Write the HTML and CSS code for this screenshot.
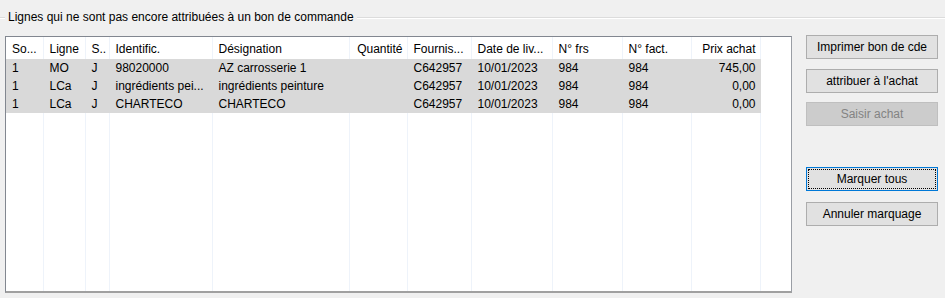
FILE: index.html
```
<!DOCTYPE html>
<html lang="fr">
<head>
    <meta charset="UTF-8">
    <title>Lignes non attribuées</title>
    <link rel="stylesheet" href="styles.css">
</head>
<body>

<div class="group">
    <div class="group-title">
        <span class="line short"></span>
        <span class="caption">Lignes qui ne sont pas encore attribuées à un bon de commande</span>
        <span class="line"></span>
    </div>

    <div class="content">
        <!-- Liste des lignes -->
        <div class="list">
            <table class="grid">
                <colgroup>
                    <col class="c1">
                    <col class="c2">
                    <col class="c3">
                    <col class="c4">
                    <col class="c5">
                    <col class="c6">
                    <col class="c7">
                    <col class="c8">
                    <col class="c9">
                    <col class="c10">
                    <col class="c11">
                    <col>
                </colgroup>
                <thead>
                    <tr>
                        <th>So...</th>
                        <th>Ligne</th>
                        <th>S..</th>
                        <th>Identific.</th>
                        <th>Désignation</th>
                        <th class="num">Quantité</th>
                        <th>Fournis...</th>
                        <th>Date de liv...</th>
                        <th>N° frs</th>
                        <th>N° fact.</th>
                        <th class="num">Prix achat</th>
                        <th class="rest"></th>
                    </tr>
                </thead>
                <tbody>
                    <tr class="sel">
                        <td>1</td><td>MO</td><td>J</td><td>98020000</td><td>AZ carrosserie 1</td><td class="num"></td>
                        <td>C642957</td><td>10/01/2023</td><td>984</td><td>984</td><td class="num">745,00</td><td class="rest"></td>
                    </tr>
                    <tr class="sel">
                        <td>1</td><td>LCa</td><td>J</td><td>ingrédients pei...</td><td>ingrédients peinture</td><td class="num"></td>
                        <td>C642957</td><td>10/01/2023</td><td>984</td><td>984</td><td class="num">0,00</td><td class="rest"></td>
                    </tr>
                    <tr class="sel">
                        <td>1</td><td>LCa</td><td>J</td><td>CHARTECO</td><td>CHARTECO</td><td class="num"></td>
                        <td>C642957</td><td>10/01/2023</td><td>984</td><td>984</td><td class="num">0,00</td><td class="rest"></td>
                    </tr>
                    <tr class="filler">
                        <td></td><td></td><td></td><td></td><td></td><td></td>
                        <td></td><td></td><td></td><td></td><td></td><td class="rest"></td>
                    </tr>
                </tbody>
            </table>
        </div>

        <!-- Boutons -->
        <div class="buttons">
            <button class="btn">Imprimer bon de cde</button>
            <button class="btn">attribuer à l'achat</button>
            <button class="btn" disabled>Saisir achat</button>
            <button class="btn focused"><span>Marquer tous</span></button>
            <button class="btn">Annuler marquage</button>
        </div>
    </div>
</div>

</body>
</html>
```

FILE: styles.css
```
html, body {
    margin: 0;
    padding: 0;
}
body {
    width: 945px;
    height: 298px;
    overflow: hidden;
    background-color: #f0f0f0;
    font-family: 'Liberation Sans', Arial, sans-serif;
    font-size: 12px;
    color: #000;
}

/* Cadre de groupe */
.group-title {
    display: flex;
    align-items: center;
    height: 34px;
}
.group-title .line {
    flex: 1;
    height: 1px;
    background-color: #dcdcdc;
    border-bottom: 1px solid #fff;
    margin-top: 1px;
}
.group-title .line.short {
    flex: 0 0 5px;
}
.caption {
    padding: 0 3px;
    margin-top: -1px;
}

.content {
    display: flex;
    padding-left: 5px;
    margin-top: 2px;
}

/* Liste */
.list {
    width: 785px;
    height: 254px;
    background-color: #fff;
    border: 1px solid #828790;
    border-right-color: #9a9ea5;
    border-bottom: 2px solid #a0a0a0;
    overflow: hidden;
}
.grid {
    width: 755px;
    height: 100%;
    table-layout: fixed;
    border-collapse: collapse;
}
.c1 { width: 37px; }
.c2 { width: 42px; }
.c3 { width: 24px; }
.c4 { width: 103px; }
.c5 { width: 137px; }
.c6 { width: 58px; }
.c7 { width: 64px; }
.c8 { width: 81px; }
.c9 { width: 70px; }
.c10 { width: 69px; }
.c11 { width: 69px; }
.grid th, .grid td {
    padding: 0 5px 0 6px;
    text-align: left;
    font-weight: normal;
    white-space: nowrap;
    overflow: hidden;
    border-right: 1px solid #eef3fa;
}
.grid th {
    height: 21px;
    padding-top: 1px;
}
.grid td {
    height: 18px;
}
.grid .num {
    text-align: right;
    padding-right: 4px;
}
.grid .rest {
    border-right: none;
}
.grid tr.sel td {
    background-color: #d9d9d9;
    border-right-color: #d9d9d9;
}
.grid tr.sel td.rest {
    background-color: #fff;
}
.grid tr.filler td {
    height: auto;
}

/* Boutons */
.buttons {
    display: flex;
    flex-direction: column;
    margin-left: 14px;
    width: 132px;
}
.btn {
    height: 24px;
    margin-bottom: 10px;
    padding: 0;
    font-family: inherit;
    font-size: 12px;
    color: #000;
    background-color: #e1e1e1;
    border: 1px solid #adadad;
    border-radius: 0;
}
.btn:first-child {
    margin-top: -1px;
}
.btn:nth-child(2) {
    margin-bottom: 9px;
}
.btn:disabled {
    background-color: #cccccc;
    border-color: #bfbfbf;
    color: #838383;
    margin-bottom: 41px;
}
.btn.focused {
    border-color: #0078d7;
    padding: 1px;
    margin-bottom: 11px;
}
.btn.focused span {
    display: flex;
    align-items: center;
    justify-content: center;
    height: 100%;
    border: 1px dotted #000;
    box-sizing: border-box;
}
```
